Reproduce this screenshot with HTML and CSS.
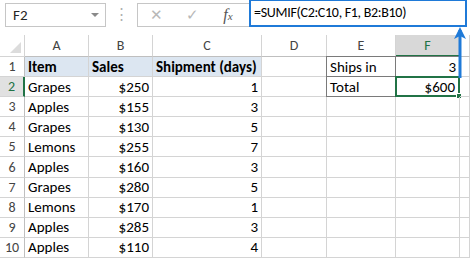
FILE: index.html
```html
<!DOCTYPE html>
<html lang="en">
<head>
    <meta charset="UTF-8">
    <title>SUMIF example</title>
    <link rel="stylesheet" href="styles.css">
</head>
<body>
    <div class="toolbar">
        <div class="name-box">
            <span>F2</span>
            <span class="caret"></span>
        </div>
        <div class="grip">&#8942;</div>
        <div class="buttons">
            <span class="btn">&#10005;</span>
            <span class="btn">&#10003;</span>
            <span class="btn fx"><i>f</i><small>x</small></span>
        </div>
        <div class="formula">=SUMIF(C2:C10, F1, B2:B10)</div>
    </div>

    <div class="sheet">
        <div class="corner"><span class="corner-tri"></span></div>
        <div class="col-head">A</div>
        <div class="col-head">B</div>
        <div class="col-head">C</div>
        <div class="col-head">D</div>
        <div class="col-head">E</div>
        <div class="col-head active">F</div>
        <div class="col-head"></div>

        <div class="row-head">1</div>
        <div class="cell head">Item</div>
        <div class="cell head">Sales</div>
        <div class="cell head">Shipment (days)</div>
        <div class="cell"></div>
        <div class="cell box box-top box-left">Ships in</div>
        <div class="cell num box box-top box-right">3</div>
        <div class="cell"></div>

        <div class="row-head active">2</div>
        <div class="cell">Grapes</div>
        <div class="cell num">$250</div>
        <div class="cell num">1</div>
        <div class="cell"></div>
        <div class="cell box box-left box-bottom">Total</div>
        <div class="cell num selected">$600<span class="handle"></span></div>
        <div class="cell"></div>

        <div class="row-head">3</div>
        <div class="cell">Apples</div>
        <div class="cell num">$155</div>
        <div class="cell num">3</div>
        <div class="cell"></div><div class="cell"></div><div class="cell"></div><div class="cell"></div>

        <div class="row-head">4</div>
        <div class="cell">Grapes</div>
        <div class="cell num">$130</div>
        <div class="cell num">5</div>
        <div class="cell"></div><div class="cell"></div><div class="cell"></div><div class="cell"></div>

        <div class="row-head">5</div>
        <div class="cell">Lemons</div>
        <div class="cell num">$255</div>
        <div class="cell num">7</div>
        <div class="cell"></div><div class="cell"></div><div class="cell"></div><div class="cell"></div>

        <div class="row-head">6</div>
        <div class="cell">Apples</div>
        <div class="cell num">$160</div>
        <div class="cell num">3</div>
        <div class="cell"></div><div class="cell"></div><div class="cell"></div><div class="cell"></div>

        <div class="row-head">7</div>
        <div class="cell">Grapes</div>
        <div class="cell num">$280</div>
        <div class="cell num">5</div>
        <div class="cell"></div><div class="cell"></div><div class="cell"></div><div class="cell"></div>

        <div class="row-head">8</div>
        <div class="cell">Lemons</div>
        <div class="cell num">$170</div>
        <div class="cell num">1</div>
        <div class="cell"></div><div class="cell"></div><div class="cell"></div><div class="cell"></div>

        <div class="row-head">9</div>
        <div class="cell">Apples</div>
        <div class="cell num">$285</div>
        <div class="cell num">3</div>
        <div class="cell"></div><div class="cell"></div><div class="cell"></div><div class="cell"></div>

        <div class="row-head">10</div>
        <div class="cell">Apples</div>
        <div class="cell num">$110</div>
        <div class="cell num">4</div>
        <div class="cell"></div><div class="cell"></div><div class="cell"></div><div class="cell"></div>
    </div>

    <svg class="arrow" width="16" height="52" viewBox="0 0 16 52">
        <path d="M8 4 V52" stroke="#1f7ad8" stroke-width="3" fill="none"/>
        <path d="M8 1 L14 13 L8 10 L2 13 Z" fill="#1f7ad8"/>
    </svg>
</body>
</html>
```

FILE: styles.css
```css
* {
    box-sizing: border-box;
}

body {
    margin: 0;
    width: 470px;
    height: 258px;
    overflow: hidden;
    background-color: #ffffff;
    font-family: Carlito, Calibri, Lato, sans-serif;
    color: #000000;
    position: relative;
}

.toolbar {
    display: flex;
    align-items: flex-start;
    height: 35px;
    padding-left: 5px;
}

.name-box {
    display: flex;
    justify-content: space-between;
    align-items: center;
    width: 101px;
    height: 24px;
    margin-top: 3px;
    padding: 0 6px 0 7px;
    border: 1px solid #c6c6c6;
    font-size: 15px;
    color: #262626;
}

.caret {
    width: 0;
    height: 0;
    border-left: 4px solid transparent;
    border-right: 4px solid transparent;
    border-top: 4px solid #8a8a8a;
}

.grip {
    width: 31px;
    text-align: center;
    margin-top: 5px;
    font-size: 15px;
    color: #b0b0b0;
}

.buttons {
    display: flex;
    align-items: center;
    width: 112px;
    height: 24px;
    margin-top: 3px;
    border: 1px solid #c6c6c6;
    border-right: none;
}

.btn {
    width: 36px;
    text-align: center;
    font-size: 15px;
    color: #b8b8b8;
}

.btn.fx {
    color: #555555;
    font-family: "Liberation Serif", serif;
    font-size: 16px;
}

.btn.fx small {
    font-size: 11px;
    font-style: italic;
}

.formula {
    width: 218px;
    height: 27px;
    border: 2px solid #1f7ad8;
    border-top-width: 1px;
    padding: 3px 0 0 3px;
    font-size: 14px;
    letter-spacing: -0.3px;
    white-space: nowrap;
}

.sheet {
    display: grid;
    grid-template-columns: 25px 64px 64px 109px 65px 69px 64px 1fr;
    grid-template-rows: 22px repeat(10, 20.1px);
    font-size: 15px;
}

.corner {
    position: relative;
    border-right: 1px solid #d4d4d4;
    border-bottom: 1px solid #d4d4d4;
}

.corner-tri {
    position: absolute;
    right: 3px;
    bottom: 3px;
    width: 0;
    height: 0;
    border-left: 11px solid transparent;
    border-bottom: 11px solid #dcdcdc;
}

.col-head {
    display: flex;
    align-items: center;
    justify-content: center;
    border-right: 1px solid #d4d4d4;
    border-bottom: 1px solid #bfbfbf;
    color: #444444;
    font-size: 14px;
}

.col-head.active {
    background-color: #d8d8d8;
    border-bottom: 2px solid #217346;
    color: #217346;
}

.row-head {
    display: flex;
    align-items: center;
    justify-content: center;
    border-right: 1px solid #bfbfbf;
    border-bottom: 1px solid #d4d4d4;
    color: #444444;
    font-size: 14px;
}

.row-head.active {
    background-color: #e1e1e1;
    border-right: 2px solid #217346;
    color: #217346;
}

.cell {
    position: relative;
    display: flex;
    align-items: center;
    padding: 0 3px;
    border-right: 1px solid #d4d4d4;
    border-bottom: 1px solid #d4d4d4;
    white-space: nowrap;
}

.cell.head {
    background-color: #dce6f1;
    font-weight: bold;
}

.cell.num {
    justify-content: flex-end;
}

.box {
    border-color: #7a7a7a;
}

.box-top {
    border-top: 1px solid #7a7a7a;
    margin-top: -1px;
}

.box-left {
    border-left: 1px solid #7a7a7a;
    margin-left: -1px;
}

.cell.selected {
    border: 2px solid #217346;
    margin: -1px 0 0 -1px;
}

.handle {
    position: absolute;
    right: -4px;
    bottom: -4px;
    width: 6px;
    height: 6px;
    background-color: #217346;
    border: 1px solid #ffffff;
}

.arrow {
    position: absolute;
    left: 452px;
    top: 26px;
}
```
